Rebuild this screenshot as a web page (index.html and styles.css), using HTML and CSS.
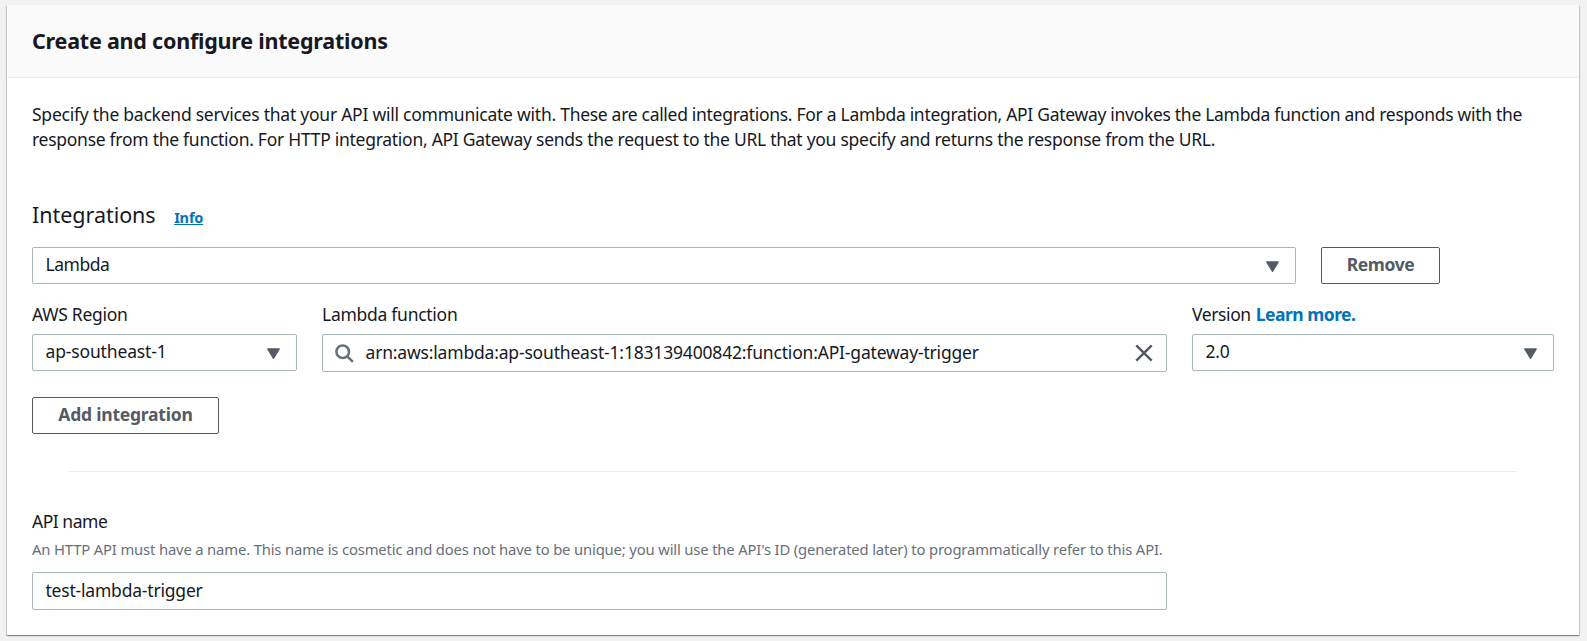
FILE: index.html
```html
<!DOCTYPE html>
<html lang="en">
<head>
<meta charset="utf-8">
<title>Create and configure integrations</title>
<link rel="stylesheet" href="styles.css">
</head>
<body>
<main class="panel">
  <header class="panel-header"><h1 class="title">Create and configure integrations</h1></header>
  <div class="panel-body">
    <p class="intro"><span class="intro-a"><span class="intro-lead">Specify the backend services that your API will communicate with.</span> These are called integrations. For a Lambda integration, API Gateway invokes the Lambda function and responds with the</span><br><span class="intro-b">response from the function. For HTTP integration, API Gateway sends the request to the URL that you specify and returns the response from the URL.</span></p>

    <div class="section-head"><h2 class="subtitle">Integrations</h2><a class="info">Info</a></div>

    <div class="type-row">
      <div class="control"><span class="value tight">Lambda</span><svg class="caret" viewBox="0 0 13 11"><path d="M1 1H12L6.5 10.2Z"/></svg></div>
      <button class="button remove"><span>Remove</span></button>
    </div>

    <div class="fields">
      <div class="field">
        <label class="label">AWS Region</label>
        <div class="control"><span class="value region">ap-southeast-1</span><svg class="caret" viewBox="0 0 13 11"><path d="M1 1H12L6.5 10.2Z"/></svg></div>
      </div>
      <div class="field">
        <label class="label">Lambda function</label>
        <div class="control search">
          <svg class="glass" viewBox="0 0 19 19"><circle cx="7.7" cy="7.7" r="6.3"/><path d="M12.3 12.3L17.9 17.9"/></svg>
          <span class="value arn">arn:aws:lambda:ap-southeast-1:183139400842:function:API-gateway-trigger</span>
          <svg class="clear" viewBox="0 0 18 18"><path d="M1.3 1.3L16.7 16.7M16.7 1.3L1.3 16.7"/></svg>
        </div>
      </div>
      <div class="field">
        <label class="label"><span class="version">Version</span> <a class="learn">Learn more.</a></label>
        <div class="control"><span class="value">2.0</span><svg class="caret" viewBox="0 0 13 11"><path d="M1 1H12L6.5 10.2Z"/></svg></div>
      </div>
    </div>

    <button class="button add"><span>Add integration</span></button>
    <hr class="divider">

    <div class="api">
      <label class="label tight">API name</label>
      <p class="hint">An HTTP API must have a name. This name is cosmetic and does not have to be unique; you will use the API's ID (generated later) to programmatically refer to this API.</p>
      <div class="control name"><span class="value trigger">test-lambda-trigger</span></div>
    </div>
  </div>
</main>
</body>
</html>
```

FILE: styles.css
```css
* { box-sizing: border-box; }
body {
  margin: 0;
  padding: 5px 7px 0;
  height: 641px;
  overflow: hidden;
  background: #f2f2f2;
  color: #16191f;
  font: 17.5px/25px "Noto Sans", "Open Sans", sans-serif;
  letter-spacing: -0.27px;
}
h1, h2, p { margin: 0; font-weight: 400; }

.panel {
  width: 1572px;
  height: 630px;
  background: #fff;
  box-shadow: 0 1px 1px rgba(0, 28, 36, .3), 1px 1px 1px rgba(0, 28, 36, .15), -1px 1px 1px rgba(0, 28, 36, .15);
}
.panel-header {
  height: 73px;
  padding: 19px 25px 0;
  background: #fafafa;
  border-bottom: 1px solid #eaeded;
}
.title { font-size: 21.5px; line-height: 33px; font-weight: 700; letter-spacing: -0.22px; }
.panel-body { padding: 24px 25px 0; }

.intro { height: 50px; white-space: nowrap; }
.intro-a { letter-spacing: -0.3px; }
.intro-lead { letter-spacing: -0.24px; }
.intro-b { letter-spacing: -0.275px; }

.section-head { display: flex; align-items: baseline; gap: 18.5px; margin-top: 48px; height: 47px; }
.subtitle { font-size: 21.5px; line-height: 30px; letter-spacing: -0.04px; }
.info { font-size: 14.5px; font-weight: 700; color: #0073bb; text-decoration: underline; letter-spacing: -0.15px; }

.type-row { display: grid; grid-template-columns: 1264px 119px; gap: 25px; }
.control {
  display: flex;
  align-items: center;
  height: 37px;
  padding: 0 16.5px 0 12.5px;
  border: 1px solid #aab7b8;
  border-radius: 2px;
  background: #fff;
  white-space: nowrap;
}
.value { flex: 1; position: relative; top: -1px; }
.region { letter-spacing: -0.15px; }
.tight { letter-spacing: -0.48px; }
.caret { width: 13px; height: 11px; margin-top: 1px; fill: #545b64; stroke: #545b64; stroke-width: 1.6; stroke-linejoin: round; }

.fields { display: grid; grid-template-columns: 265px 845px 362px; gap: 25px; margin-top: 18px; }
.label { display: block; line-height: 25px; white-space: nowrap; }
.field .label { margin-bottom: 7px; }
.version { letter-spacing: -0.4px; }
.learn { margin-left: 0.8px; color: #0073bb; font-weight: 700; letter-spacing: -0.52px; }
.search { height: 38px; padding: 0 13.5px 0 12px; }
.glass { width: 19px; height: 19px; margin-right: 11.5px; fill: none; stroke: #687078; stroke-width: 2.5; }
.arn { letter-spacing: -0.18px; }
.clear { width: 18px; height: 18px; fill: none; stroke: #545b64; stroke-width: 2.4; }

.button {
  display: block;
  height: 37px;
  padding: 0 0 2px;
  border: 1px solid #545b64;
  border-radius: 2px;
  background: #fff;
  color: #545b64;
  font: 700 17.5px/33px "Noto Sans", "Open Sans", sans-serif;
  letter-spacing: -0.43px;
}
.add { width: 187px; margin-top: 25px; letter-spacing: -0.22px; }
.divider { height: 1px; margin: 37px 37px 0; border: 0; background: #eaeded; }

.api { width: 1135px; margin-top: 37px; }
.hint { margin-top: 4px; font-size: 14.8px; line-height: 22px; color: #687078; letter-spacing: -0.153px; white-space: nowrap; }
.name { height: 38px; margin-top: 12px; }
.trigger { letter-spacing: -0.2px; }
```
